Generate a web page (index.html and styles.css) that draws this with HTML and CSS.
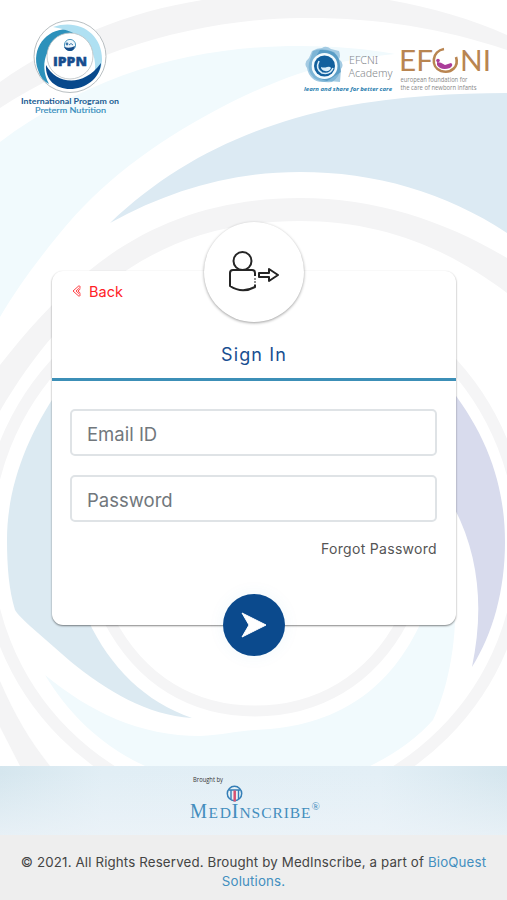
FILE: index.html
```html
<!DOCTYPE html>
<html lang="en">
<head>
<meta charset="utf-8">
<meta name="viewport" content="width=device-width, initial-scale=1">
<title>Sign In</title>
<link rel="stylesheet" href="styles.css">
</head>
<body>
<main class="page">
  <svg class="backdrop" viewBox="0 0 507 766" aria-hidden="true">
    <path fill="#f4f4f5" d="M0 82C65 36 142 6 225-3H370C420 4 467 17 507 35V50C440 27 370 17 300 18C195 19 85 53 0 108Z"/>
    <path fill="#f1fafd" d="M0 142C90 75 190 46 300 46C335 46 369 49 395 54C330 60 280 77 220 108C150 145 100 184 60 233C33 266 16 290 0 317Z"/>
    <path fill="#dceaf3" d="M110 223C175 161 250 126 340 107C400 96 455 93 507 93V233C445 192 375 172 300 172C233 172 170 190 110 223Z"/>
    <path fill="#f4f4f5" d="M0 365C26 332 53 301 90 270C150 221 220 198 300 198C376 198 445 221 507 258V293C446 247 380 221 300 221C235 221 180 235 127 270C72 307 33 355 0 411Z"/>
    <path fill="#f4f4f5" d="M0 681C15 716 31 742 50 766H20L0 727Z"/>
    <circle cx="254" cy="544" r="268" fill="none" stroke="#f5f5f6" stroke-width="12"/>
    <path fill="#dceaf2" d="M60 388C25 438 7 490 7 540C7 567 9 590 15 610Q17 614 30 626L70 661C108 692 147 715 192 718C145 702 110 667 88 620Z"/>
    <path fill="#f1fafd" d="M45 675C90 712 140 736 200 736C222 735 237 731 255 730C338 727 391 689 422 620H455C454 657 445 695 433 720Q409 747 370 766H145C100 745 68 713 45 675Z"/>
    <path fill="none" stroke="#f5f5f6" stroke-width="11" d="M109 620C141 681 193 711 255 711S371 681 403 620"/>
    <path fill="#d8dbed" d="M450 388C490 439 505 490 505 542C505 590 493 634 472 667C484 609 480 553 450 500Z"/>
  </svg>

  <header class="brands">
    <svg class="logo-ippn" viewBox="0 0 104 98" role="img" aria-label="IPPN">
      <circle cx="52" cy="36.500" r="36" fill="#fff" stroke="#b9bfc2"/>
      <path fill="#2d91bb" d="M61 12C36 1 11 24 20 50Q23 60 31 64C20 43 28 18 61 12Z"/>
      <path fill="#afe0f2" d="M35 7C61-2 85 14 84 41Q83 54 74 60C84 37 70 12 35 7Z"/>
      <path fill="#08498c" d="M28 45C38 64 65 68 83 43C82 59 67 69 52 69C38 69 27 60 28 45Z"/>
      <circle cx="52" cy="36" r="23" fill="#fff" stroke="#b9bfc2" stroke-width=".8"/>
      <circle cx="52" cy="25" r="5.600" fill="#edf6fb" stroke="#519ac1" stroke-width="1"/>
      <path d="M46 27Q52 29 57 26Q56 31 52 31Q48 31 46 27Z" fill="#164c89"/>
      <circle cx="49" cy="24" r="1.400" fill="#417aab"/><path d="M51 25q2-3 4 0" fill="none" stroke="#417aab"/>
      <text class="ippn-name" x="35" y="45.500" textLength="34" lengthAdjust="spacingAndGlyphs">IPPN</text>
      <text class="ippn-line" x="3" y="83.500" textLength="98" lengthAdjust="spacingAndGlyphs">International Program on</text>
      <text class="ippn-line ippn-sub" x="17" y="93" textLength="71" lengthAdjust="spacingAndGlyphs">Preterm Nutrition</text>
    </svg>
    <svg class="logo-efcni" viewBox="0 0 190 50" role="img" aria-label="EFCNI Academy, EFCNI">
      <path fill="#a4cbe3" d="M9 5Q14 2 19 2Q23-1 28 3L36 5Q38 10 36 13Q42 18 38 23L37 36L26 35Q15 38 9 32Q5 28 4 22Q0 17 6 12Z"/>
      <path fill="#68a9cf" opacity=".65" d="M10 5Q20 1 31 6Q38 13 37 23Q37 31 29 36Q18 37 11 32Q4 25 6 17Z"/>
      <path fill="#3b86b8" opacity=".55" d="M17 4Q33 3 36 14L38 26L24 35Q7 30 8 18Z"/>
      <circle cx="21.500" cy="20" r="13" fill="#f3fbfe"/>
      <circle cx="21.500" cy="20" r="10.500" fill="#12609d"/>
      <path fill="none" stroke="#d9edf8" stroke-width="1.600" d="M16 15Q12 23 19 27Q27 29 30 22"/>
      <path fill="#d9edf8" d="M18 21q3 1 6 0q3-1 4 1q-2 4-6 3q-4-1-4-4Z"/>
      <text class="academy" x="46" y="17.500" textLength="29" lengthAdjust="spacingAndGlyphs">EFCNI</text>
      <text class="academy" x="45.500" y="30.500" textLength="44" lengthAdjust="spacingAndGlyphs">Academy</text>
      <text class="slogan" x="1" y="44.500" textLength="88" lengthAdjust="spacingAndGlyphs">learn and share for better care</text>
      <g class="efcni-name">
        <text x="96" y="25" textLength="34" lengthAdjust="spacingAndGlyphs">EF</text>
        <text x="157" y="25" textLength="31" lengthAdjust="spacingAndGlyphs">NI</text>
      </g>
      <path fill="none" stroke="#b98551" stroke-width="2.600" d="M141 3C129 5 127 21 138 25C149 28 156 20 153 11"/>
      <path fill="#aa3c99" d="M134 16Q138 16 142 19L148 17Q151 19 147 22Q138 25 134 19Z"/>
      <circle cx="135" cy="14.500" r="1.800" fill="#aa3c99"/>
      <text class="foundation" x="97.500" y="35.500" textLength="67" lengthAdjust="spacingAndGlyphs">european foundation for</text>
      <text class="foundation" x="97.500" y="44" textLength="76" lengthAdjust="spacingAndGlyphs">the care of newborn infants</text>
    </svg>
  </header>

  <form class="card">
    <div class="avatar">
      <svg viewBox="0 0 52 42" fill="none" stroke="#252525" stroke-width="2" stroke-linejoin="round" aria-hidden="true">
        <circle cx="14.500" cy="10" r="9"/>
        <path d="M27 25V22Q27 19 24 19H5Q2 19 2 22V35Q14 43 27 36V33.500M27 27.500V28.500M27 30.500V31.500M31 22H41V18L50 24L41 30V26H31Z"/>
      </svg>
    </div>
    <div class="card-head">
      <a class="back" href="#"><svg viewBox="0 0 10 12" aria-hidden="true"><path d="M7 .7L1 6L7 11.300L8.500 10L4 6L8.500 2ZM8.500 3.800L6 6L8.500 8.300" fill="none" stroke="currentColor" stroke-width=".85"/></svg>Back</a>
      <h1>Sign In</h1>
    </div>
    <div class="fields">
      <input type="email" placeholder="Email ID" aria-label="Email ID">
      <input type="password" placeholder="Password" aria-label="Password">
      <a class="forgot" href="#">Forgot Password</a>
    </div>
    <button class="submit" type="button" aria-label="Sign in"><svg viewBox="0 0 26 26" aria-hidden="true"><path fill="#fff" stroke="#fff" stroke-linejoin="round" d="M1 1L25 13L1 25L8 13Z"/></svg></button>
  </form>
</main>

<section class="sponsor">
  <svg viewBox="0 0 134 52" role="img" aria-label="Brought by MedInscribe">
    <text class="brought" x="5" y="10" textLength="30" lengthAdjust="spacingAndGlyphs">Brought by</text>
    <circle cx="46.500" cy="21.500" r="7.200" fill="#e7f2f7" stroke="#347eb7" stroke-width="1.500"/>
    <path stroke="#347eb7" stroke-width="1.400" d="M41 18H52M43 18V27M50.500 18V27"/>
    <path stroke="#d75272" stroke-width="2.500" d="M46.700 18.500V29.500"/>
    <g class="medinscribe">
      <text x="2" y="46" textLength="17" lengthAdjust="spacingAndGlyphs">M</text>
      <text class="small-cap" x="20.500" y="46" textLength="22.500">ED</text>
      <text x="43.500" y="46" textLength="7" lengthAdjust="spacingAndGlyphs">I</text>
      <text class="small-cap" x="51.500" y="46" textLength="71">NSCRIBE</text>
      <text class="mark" x="123.500" y="38">®</text>
    </g>
  </svg>
</section>
<footer class="footer">© 2021. All Rights Reserved. Brought by MedInscribe, a part of <a href="#">BioQuest Solutions.</a></footer>
</body>
</html>
```

FILE: styles.css
```css
* { box-sizing: border-box; }
body {
  margin: 0;
  min-height: 900px;
  display: flex;
  flex-direction: column;
  background: #fff;
  color: #444;
  font-family: Inter, sans-serif;
}
a { color: inherit; text-decoration: none; }
.page { position: relative; height: 766px; overflow: hidden; }
.backdrop { position: absolute; inset: 0; width: 100%; height: 100%; }
.brands {
  position: relative;
  height: 271px;
  display: flex;
  justify-content: space-between;
  align-items: flex-start;
  padding: 20px 15px 0 18px;
}
.logo-ippn { width: 104px; height: 98px; }
.logo-efcni { width: 190px; height: 50px; margin-top: 26px; margin-right: -1px; }
.ippn-name { font: 900 13px "Open Sans", sans-serif; fill: #174d8e; stroke: #174d8e; stroke-width: .4px; }
.ippn-line { font: 700 8.400px Lato, sans-serif; fill: #205a91; }
.ippn-sub { font-weight: 400; fill: #328bbb; stroke: #328bbb; stroke-width: .15px; }
.academy { font: 300 11.500px "Noto Sans", sans-serif; font-size: 11px; fill: #85898d; }
.slogan { font: italic 700 6px "Open Sans", sans-serif; fill: #267cae; }
.efcni-name { font: 400 28px Lato, sans-serif; fill: #b98551; }
.foundation { font: 400 6.200px "Open Sans", sans-serif; fill: #888; }
.card {
  position: relative;
  width: 404px;
  height: 354px;
  margin-left: 52px;
  border-radius: 11px;
  background: #fff;
  box-shadow: 0 1px 2px rgba(0, 0, 0, .48);
}
.avatar {
  position: absolute;
  left: 152px;
  top: -49px;
  width: 100px;
  height: 100px;
  border-radius: 50%;
  background: #fff;
  box-shadow: 0 1px 3px rgba(0, 0, 0, .38);
}
.avatar svg { display: block; width: 52px; height: 42px; margin: 29px 0 0 24px; }
.card-head { height: 110px; padding: 10px 20px 0; border-bottom: 3px solid #3c8fb7; }
.back { display: flex; align-items: center; width: max-content; height: 20px; gap: 7px; color: #ff2026; font-size: 14.500px; }
.back svg { width: 10px; height: 12px; }
h1 { margin: 41px 0 0; color: #174e91; text-align: center; font-size: 18px; font-weight: 400; line-height: 26px; letter-spacing: 1.100px; }
.fields { display: flex; flex-direction: column; padding: 28px 19px 0 18px; gap: 19px; }
input {
  width: 100%;
  height: 47px;
  padding: 2px 15px 0;
  border: 2px solid #dfe3e6;
  border-radius: 5px;
  background: #fff;
  color: #333;
  font: 18.500px Inter, sans-serif;
}
input::placeholder { color: #71777c; opacity: 1; }
.forgot { align-self: flex-end; margin-top: -2px; font-size: 14px; line-height: 20px; letter-spacing: .3px; color: #555; }
.submit {
  position: absolute;
  left: 171px;
  top: 323px;
  width: 62px;
  height: 62px;
  padding: 0;
  border: 0;
  border-radius: 50%;
  background: #0b4a8d;
  display: grid;
  place-items: center;
  box-shadow: 0 0 18px rgba(40, 140, 190, .06);
}
.submit svg { width: 26px; height: 26px; }
.sponsor {
  height: 69px;
  padding-left: 188px;
  padding-top: 6px;
  background: linear-gradient(180deg, transparent 10%, rgba(238, 244, 249, .72)), linear-gradient(90deg, #d5e6ee, #e1eef5 20%, #e3eff6 75%, #d5e6ee);
}
.sponsor svg { display: block; width: 134px; height: 52px; }
.brought { font: 6.500px "Open Sans", sans-serif; fill: #333; }
.medinscribe { font: 20px "Liberation Serif", serif; fill: #438dbd; }
.small-cap { font-size: 15.500px; }
.mark { font-size: 11px; }
.footer { flex: 1; padding: 18px 17px 0; background: #eee; text-align: center; font-size: 13.300px; line-height: 19px; letter-spacing: .15px; }
.footer a { color: #438fbf; }
```
